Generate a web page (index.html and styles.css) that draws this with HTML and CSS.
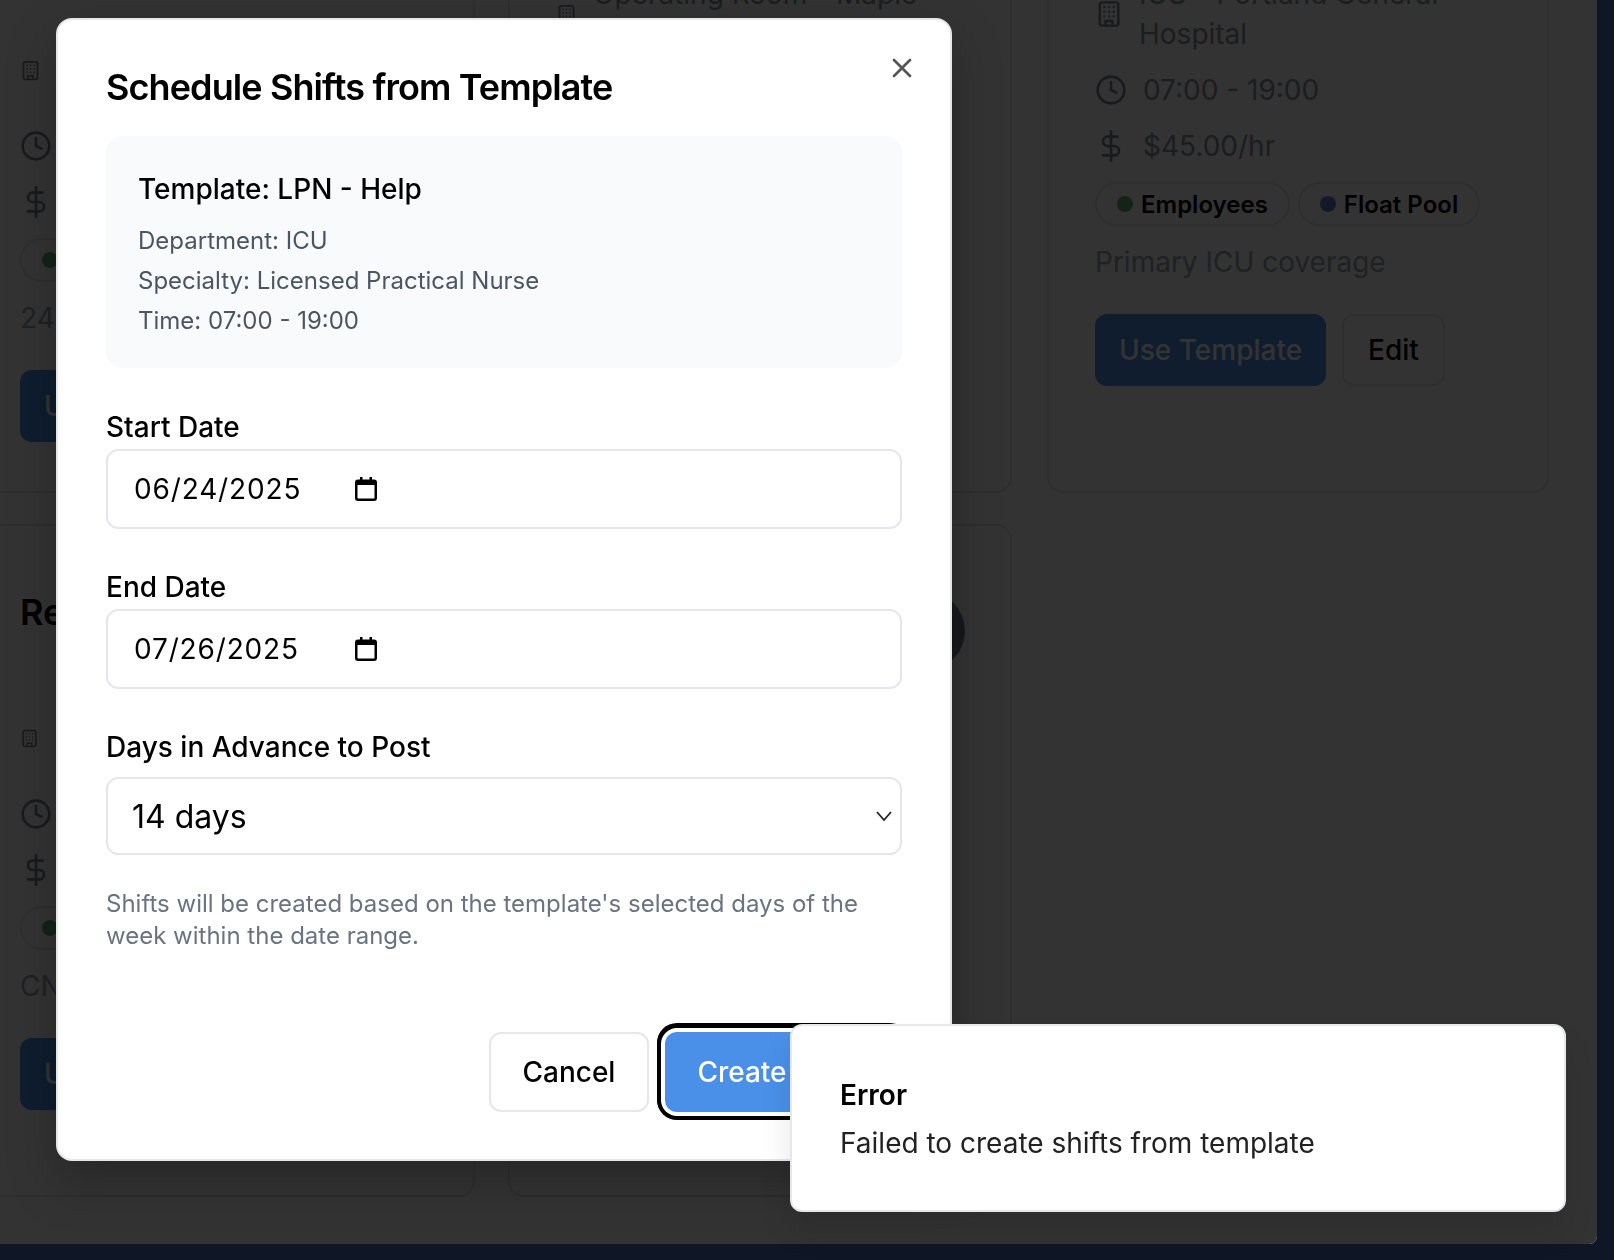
FILE: index.html
```html
<!DOCTYPE html>
<html lang="en">
<head>
    <meta charset="UTF-8">
    <meta name="viewport" content="width=device-width, initial-scale=1.0">
    <title>Schedule Shifts from Template</title>
    <link rel="stylesheet" href="styles.css">
</head>
<body>
    <svg class="sprites" width="0" height="0">
        <symbol id="building" viewBox="0 0 24 24">
            <rect x="4" y="2" width="16" height="20" rx="2"></rect>
            <path d="M9 22v-4h6v4M8 6h.01M16 6h.01M12 6h.01M12 10h.01M12 14h.01M16 10h.01M16 14h.01M8 10h.01M8 14h.01"></path>
        </symbol>
        <symbol id="clock" viewBox="0 0 24 24">
            <circle cx="12" cy="12" r="10"></circle>
            <path d="M12 6v6l4 2"></path>
        </symbol>
        <symbol id="dollar" viewBox="0 0 24 24">
            <path d="M12 1v22M17 5H9.5a3.5 3.5 0 0 0 0 7h5a3.5 3.5 0 0 1 0 7H6"></path>
        </symbol>
        <symbol id="calendar" viewBox="0 0 22 24">
            <path class="solid" d="M5 0h2.500v2.500h7V0H17v2.500h2a3 3 0 0 1 3 3V21a3 3 0 0 1-3 3H3a3 3 0 0 1-3-3V5.500a3 3 0 0 1 3-3h2zM2.500 8v13c0 .3.200.500.500.500h16c.3 0 .500-.200.500-.500V8z"></path>
        </symbol>
    </svg>

    <div class="app">
        <div class="cards">
            <section class="card">
                <div class="card-head head-tall"></div>
                <div class="meta">
                    <div class="meta-row meta-row-tall">
                        <svg class="icon building-small"><use href="#building"></use></svg>
                    </div>
                    <div class="meta-row">
                        <svg class="icon"><use href="#clock"></use></svg>
                    </div>
                    <div class="meta-row">
                        <svg class="icon"><use href="#dollar"></use></svg>
                    </div>
                </div>
                <div class="pills">
                    <span class="pill"><i class="dot dot-green"></i></span>
                </div>
                <p class="card-desc">24/7</p>
                <div class="card-actions">
                    <button class="btn btn-primary">Use Template</button>
                </div>
            </section>

            <section class="card">
                <div class="card-head head-short"></div>
                <div class="meta">
                    <div class="meta-row meta-row-tall">
                        <svg class="icon building-small"><use href="#building"></use></svg>
                        <span>Operating Room - Maple Grove Hospital</span>
                    </div>
                </div>
            </section>

            <section class="card card-right">
                <div class="card-head head-short"></div>
                <div class="meta">
                    <div class="meta-row meta-row-tall">
                        <svg class="icon building-large"><use href="#building"></use></svg>
                        <span>ICU - Portland General Hospital</span>
                    </div>
                    <div class="meta-row">
                        <svg class="icon"><use href="#clock"></use></svg>
                        <span class="meta-text">07:00 - 19:00</span>
                    </div>
                    <div class="meta-row">
                        <svg class="icon"><use href="#dollar"></use></svg>
                        <span class="meta-text">$45.00/hr</span>
                    </div>
                </div>
                <div class="pills">
                    <span class="pill"><i class="dot dot-green"></i>Employees</span>
                    <span class="pill"><i class="dot dot-blue"></i>Float Pool</span>
                </div>
                <p class="card-desc">Primary ICU coverage</p>
                <div class="card-actions">
                    <button class="btn btn-primary">Use Template</button>
                    <button class="btn btn-outline">Edit</button>
                </div>
            </section>

            <section class="card">
                <div class="card-head head-title">
                    <h2 class="card-title">Relief</h2>
                </div>
                <div class="meta">
                    <div class="meta-row meta-row-tall">
                        <svg class="icon building-tiny"><use href="#building"></use></svg>
                    </div>
                    <div class="meta-row">
                        <svg class="icon"><use href="#clock"></use></svg>
                    </div>
                    <div class="meta-row">
                        <svg class="icon"><use href="#dollar"></use></svg>
                    </div>
                </div>
                <div class="pills">
                    <span class="pill"><i class="dot dot-green"></i></span>
                </div>
                <p class="card-desc">CNA</p>
                <div class="card-actions">
                    <button class="btn btn-primary">Use Template</button>
                </div>
            </section>

            <section class="card">
                <span class="round-badge"></span>
            </section>
        </div>
        <div class="overlay"></div>
    </div>

    <div class="modal">
        <button class="modal-close" aria-label="Close">
            <svg viewBox="0 0 24 24"><path d="M18 6 6 18M6 6l12 12"></path></svg>
        </button>
        <h1 class="modal-title">Schedule Shifts from Template</h1>

        <div class="info-box">
            <h3 class="info-title">Template: LPN - Help</h3>
            <p class="info-line">Department: ICU</p>
            <p class="info-line">Specialty: Licensed Practical Nurse</p>
            <p class="info-line">Time: 07:00 - 19:00</p>
        </div>

        <div class="field field-first">
            <label class="field-label">Start Date</label>
            <div class="date-input">
                <span class="date-value">06/24/2025</span>
                <svg class="calendar"><use href="#calendar"></use></svg>
            </div>
        </div>

        <div class="field">
            <label class="field-label">End Date</label>
            <div class="date-input">
                <span class="date-value">07/26/2025</span>
                <svg class="calendar"><use href="#calendar"></use></svg>
            </div>
        </div>

        <div class="field field-select">
            <label class="field-label">Days in Advance to Post</label>
            <div class="select-input">
                <span>14 days</span>
                <svg class="chevron" viewBox="0 0 16 10"><path d="M1 1l7 8 7-8"></path></svg>
            </div>
        </div>

        <p class="hint">Shifts will be created based on the template's selected days of the week within the date range.</p>

        <div class="modal-footer">
            <button class="btn btn-cancel">Cancel</button>
            <button class="btn btn-create">Create Shifts</button>
        </div>
    </div>

    <div class="toast">
        <div class="toast-title">Error</div>
        <div class="toast-text">Failed to create shifts from template</div>
    </div>
</body>
</html>
```

FILE: styles.css
```css
* {
    box-sizing: border-box;
}

html,
body {
    margin: 0;
    height: 100%;
    overflow: hidden;
    background-color: #0f1727;
}

body {
    font-family: 'Inter', 'Liberation Sans', sans-serif;
    color: #000;
}

.sprites {
    position: absolute;
}

button {
    font-family: inherit;
}

/* page behind the dialog */
.app {
    position: relative;
    width: 1597px;
    height: 1244px;
    background-color: #fff;
    border-bottom-right-radius: 8px;
    overflow: hidden;
}

.overlay {
    position: absolute;
    inset: 0;
    background-color: rgba(0, 0, 0, 0.8);
}

.cards {
    display: grid;
    grid-template-columns: 503px 504px 504px;
    grid-template-rows: 593px 673px;
    column-gap: 33px;
    row-gap: 31px;
    margin: -100px 0 0 -28px;
}

.card {
    position: relative;
    border: 2px solid #e5e7eb;
    border-radius: 16px;
    padding: 46px;
}

.card-right {
    margin-left: 2px;
}

.head-short {
    height: 26px;
}

.head-tall {
    height: 82px;
}

.head-title {
    height: 126px;
}

.card-title {
    margin: 0;
    font-size: 36px;
    line-height: 80px;
    font-weight: 600;
}

.meta {
    display: flex;
    flex-direction: column;
    gap: 16px;
    font-size: 28px;
    line-height: 40px;
    color: #8a919c;
}

.meta-row {
    display: flex;
    align-items: center;
    gap: 16px;
    min-height: 40px;
}

.meta-row-tall {
    min-height: 80px;
}

.icon {
    flex-shrink: 0;
    width: 32px;
    height: 32px;
    fill: none;
    stroke: #7f8490;
    stroke-width: 2;
    stroke-linecap: round;
    stroke-linejoin: round;
}

.building-large {
    width: 28px;
    height: 28px;
}

.building-small {
    width: 21px;
    height: 21px;
}

.building-tiny {
    width: 19px;
    height: 19px;
}

.pills {
    display: flex;
    gap: 8px;
    margin-top: 16px;
}

.pill {
    display: inline-flex;
    align-items: center;
    gap: 8px;
    height: 44px;
    padding: 0 20px;
    border: 2px solid #e5e7eb;
    border-radius: 22px;
    font-size: 24px;
    font-weight: 600;
}

.dot {
    width: 16px;
    height: 16px;
    border-radius: 50%;
}

.dot-green {
    background-color: #62b074;
}

.dot-blue {
    background-color: #5f7fd8;
}

.card-desc {
    margin: 16px 0 0;
    font-size: 28px;
    line-height: 40px;
    color: #a0a6b0;
}

.card-actions {
    display: flex;
    gap: 16px;
    margin-top: 32px;
}

.btn {
    height: 72px;
    border-radius: 12px;
    padding: 0 24px;
    font-size: 28px;
    font-weight: 500;
    white-space: nowrap;
}

.btn-primary {
    flex-shrink: 0;
    background-color: #4a90e8;
    color: #fff;
    border: none;
}

.btn-outline {
    flex-shrink: 0;
    background-color: #fff;
    border: 2px solid #e5e7eb;
}

.round-badge {
    position: absolute;
    left: 375px;
    top: 65px;
    width: 80px;
    height: 80px;
    border-radius: 50%;
    background-color: #737d8c;
}

/* dialog */
.modal {
    position: fixed;
    left: 56px;
    top: 18px;
    width: 896px;
    height: 1143px;
    padding: 48px;
    background-color: #fff;
    border: 2px solid #e5e7eb;
    border-radius: 16px;
    box-shadow: 0 20px 50px rgba(0, 0, 0, 0.25);
}

.modal-close {
    position: absolute;
    top: 32px;
    right: 32px;
    width: 32px;
    height: 32px;
    padding: 0;
    border: none;
    background: none;
}

.modal-close svg {
    display: block;
    fill: none;
    stroke: #555;
    stroke-width: 2;
    stroke-linecap: round;
    stroke-linejoin: round;
}

.modal-title {
    margin: 0;
    font-size: 36px;
    line-height: 38px;
    font-weight: 600;
    letter-spacing: -0.9px;
}

.info-box {
    margin-top: 30px;
    height: 232px;
    padding: 33px 32px 0;
    background-color: #f9fafb;
    border-radius: 16px;
}

.info-title {
    margin: 0 0 12px;
    font-size: 28px;
    line-height: 40px;
    font-weight: 500;
}

.info-line {
    margin: 0;
    font-size: 24px;
    line-height: 40px;
    color: #4b5563;
}

.field {
    margin-top: 44px;
}

.field-first {
    margin-top: 45px;
}

.field-label {
    display: block;
    margin-bottom: 8px;
    font-size: 28px;
    line-height: 28px;
    font-weight: 500;
}

.date-input {
    display: flex;
    align-items: center;
    height: 80px;
    padding: 0 26px;
    border: 2px solid #e5e7eb;
    border-radius: 12px;
}

.date-value {
    width: 221px;
    font-size: 28px;
    letter-spacing: 0.85px;
}

.calendar {
    width: 22px;
    height: 24px;
}

.solid {
    fill: #000;
    fill-rule: evenodd;
}

.field-select .field-label {
    margin-bottom: 16px;
}

.select-input {
    display: flex;
    align-items: center;
    justify-content: space-between;
    height: 78px;
    padding: 0 8px 0 24px;
    border: 2px solid #e5e7eb;
    border-radius: 12px;
    font-size: 32px;
}

.chevron {
    width: 16px;
    height: 10px;
    fill: none;
    stroke: #222;
    stroke-width: 1.8;
}

.hint {
    margin: 33px 0 0;
    font-size: 24px;
    line-height: 32px;
    color: #6b7280;
}

.modal-footer {
    display: flex;
    justify-content: flex-end;
    gap: 16px;
    margin-top: 80px;
}

.btn-cancel,
.btn-create {
    height: 80px;
    padding: 0 32px;
}

.btn-cancel {
    padding-left: 31px;
    background-color: #fff;
    border: 2px solid #e5e7eb;
}

.btn-create {
    background-color: #4a90e8;
    color: #fff;
    border: none;
    box-shadow: 0 0 0 4px #fff, 0 0 0 8px #000, 0 -1px 0 8px #000;
}

/* toast */
.toast {
    position: fixed;
    left: 790px;
    top: 1024px;
    width: 776px;
    height: 188px;
    padding: 49px 48px 0;
    background-color: #fff;
    border: 2px solid #e5e7eb;
    border-radius: 12px;
    box-shadow: 0 20px 30px rgba(0, 0, 0, 0.1);
}

.toast-title {
    margin-bottom: 8px;
    font-size: 28px;
    line-height: 40px;
    font-weight: 600;
}

.toast-text {
    font-size: 28px;
    line-height: 40px;
    color: #222;
}
```
